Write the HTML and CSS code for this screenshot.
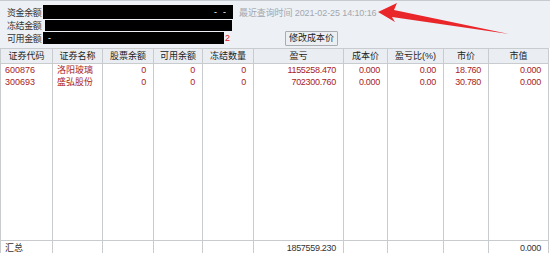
FILE: index.html
```html
<!DOCTYPE html>
<html lang="zh-CN">
<head>
    <meta charset="UTF-8">
    <title>资金股份</title>
    <link rel="stylesheet" href="styles.css">
</head>
<body>
    <!-- 资金信息 -->
    <div class="panel">
        <div class="line l1">
            <span class="lbl">资金余额</span>
            <span class="mask m1"><span class="dash">-</span><span class="dash">-</span></span>
            <span class="time">最近查询时间 2021-02-25 14:10:16</span>
        </div>
        <div class="line l2">
            <span class="lbl">冻结金额</span>
            <span class="mask m2"></span>
        </div>
        <div class="line l3">
            <span class="lbl">可用金额</span>
            <span class="mask m3"><span class="dash first">-</span></span>
            <span class="red-tail">2</span>
            <button class="btn">修改成本价</button>
        </div>
        <!-- 红色箭头 -->
        <svg class="arrow" width="550" height="48" viewBox="0 0 550 48">
            <polygon points="378,11 397,2 394,9 509,33 392,16 395,21" fill="#e9272b"/>
        </svg>
    </div>

    <!-- 持仓表格 -->
    <table class="grid">
        <colgroup>
            <col style="width:52px"><col style="width:50px"><col style="width:51px"><col style="width:49px"><col style="width:51px">
            <col style="width:90px"><col style="width:44px"><col style="width:56px"><col style="width:45px"><col style="width:60px">
        </colgroup>
        <thead>
            <tr>
                <th>证券代码</th><th>证券名称</th><th>股票余额</th><th>可用余额</th><th>冻结数量</th>
                <th>盈亏</th><th>成本价</th><th>盈亏比(%)</th><th>市价</th><th>市值</th>
            </tr>
        </thead>
        <tbody>
            <tr class="row">
                <td class="l">600876</td><td class="l">洛阳玻璃</td><td class="r">0</td><td class="r">0</td><td class="r">0</td>
                <td class="r">1155258.470</td><td class="r">0.000</td><td class="r">0.00</td><td class="r">18.760</td><td class="r">0.000</td>
            </tr>
            <tr class="row">
                <td class="l">300693</td><td class="l">盛弘股份</td><td class="r">0</td><td class="r">0</td><td class="r">0</td>
                <td class="r">702300.760</td><td class="r">0.000</td><td class="r">0.00</td><td class="r">30.780</td><td class="r">0.000</td>
            </tr>
            <tr class="filler">
                <td></td><td></td><td></td><td></td><td></td><td></td><td></td><td></td><td></td><td></td>
            </tr>
            <tr class="sum">
                <td class="l">汇总</td><td></td><td></td><td></td><td></td>
                <td class="r">1857559.230</td><td></td><td></td><td></td><td class="r">0.000</td>
            </tr>
        </tbody>
    </table>
</body>
</html>
```

FILE: styles.css
```css
/* 整体 */
body {
    margin: 0;
    width: 550px;
    height: 253px;
    overflow: hidden;
    background: #ffffff;
    font-family: "Liberation Sans", "Noto Sans CJK SC", sans-serif;
    font-size: 9px;
    color: #333;
}

/* 上方资金面板 */
.panel {
    position: relative;
    height: 48px;
    box-sizing: border-box;
    padding-top: 4px;
    border-top: 1px solid #c6cbd1;
    background: #edf1f6;
}

.line {
    display: flex;
    align-items: center;
}

.l1 { height: 14px; }
.l2 { height: 11px; margin-top: 1px; }
.l3 { height: 12px; margin-top: 1px; }

.lbl {
    flex: none;
    width: 35px;
    padding-left: 7px;
    white-space: nowrap;
    overflow: hidden;
    letter-spacing: -0.4px;
    color: #333;
}

.mask {
    flex: none;
    display: flex;
    align-items: center;
    height: 100%;
    background: #000;
    color: #fff;
}

.m1 {
    width: 190px;
    margin-left: 1px;
    justify-content: flex-end;
    gap: 6px;
    padding-right: 7px;
    box-sizing: border-box;
}

.m2 {
    width: 187px;
    margin-left: 3px;
}

.m3 {
    width: 181px;
    margin-left: 1px;
}

.dash.first {
    margin-left: 5px;
}

.time {
    margin-left: 6px;
    color: #a3a7ad;
    white-space: nowrap;
    letter-spacing: -0.1px;
}

.red-tail {
    color: #e02020;
    margin-left: 1px;
}

.btn {
    margin-left: 55px;
    height: 15px;
    padding: 0 3px;
    font-family: inherit;
    font-size: 9px;
    line-height: 13px;
    color: #222;
    background: #eceff2;
    border: 1px solid #a9adb2;
    border-radius: 1px;
}

.arrow {
    position: absolute;
    top: 0;
    left: 0;
}

/* 表格 */
.grid {
    width: 548px;
    table-layout: fixed;
    border-collapse: collapse;
}

.grid th,
.grid td {
    padding: 0 7px 0 4px;
    border-left: 1px solid #c9cccf;
    border-right: 1px solid #c9cccf;
    white-space: nowrap;
    overflow: hidden;
    line-height: 11px;
}

.grid th {
    height: 14px;
    padding: 0;
    font-weight: normal;
    text-align: center;
    background: #eaeef3;
    border-top: 1px solid #c9cccf;
    border-bottom: 1px solid #c9cccf;
    color: #222;
}

.row td {
    height: 12px;
    color: #a82226;
}

.filler td {
    height: 152px;
}

.sum td {
    height: 14px;
    border-top: 1px solid #c9cccf;
    color: #333;
}

.l { text-align: left; }
.r { text-align: right; letter-spacing: -0.3px; }
```
